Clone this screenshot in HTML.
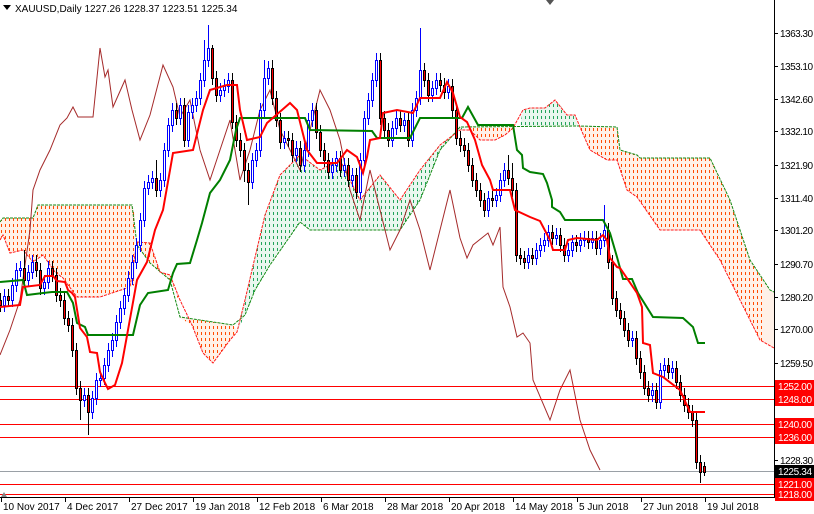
<!DOCTYPE html>
<html><head><meta charset="utf-8"><style>
html,body{margin:0;padding:0;background:#fff;width:814px;height:514px;overflow:hidden}
svg{display:block}
text{font-family:"Liberation Sans",sans-serif;font-size:10px}
</style></head><body>
<svg width="814" height="514" xmlns="http://www.w3.org/2000/svg">
<defs>
<clipPath id="co">
<polygon points="0,222 3,218 33,218 38,205 132,205 135,215 135,285 130,287 123,290 110,293 100,297 77,297 63,278 55,272 43,255 33,262 23,250 10,253 3,235 0,240"/>
<polygon points="137,242 150,243 160,272 170,275 177,297 180,300 170,280 150,263 137,245"/>
<polygon points="180,317 233,325 237,330 230,340 213,363 203,353 192,325 180,318"/>
<polygon points="470,126 520,126 513,128 505,135 495,140 480,140 470,130"/>
<polygon points="578,126 617,127 620,150 637,155 640,158 710,158 730,200 750,260 770,290 774,292 774,348 760,340 740,300 720,260 700,230 660,230 637,197 627,190 617,160 607,160 590,150 580,127"/>
</clipPath>
<clipPath id="cg">
<polygon points="237,332 245,300 252,270 265,215 280,175 300,155 320,170 340,160 360,200 380,175 400,200 420,170 440,145 460,130 470,126 460,127 440,150 420,200 410,215 400,230 310,230 300,222 270,265 255,290 245,315"/>
<polygon points="520,126 523,110 530,108 545,108 550,103 555,100 560,105 567,115 575,115 578,126"/>
</clipPath>
</defs>
<g fill="#fff1e8">
<polygon points="0,222 3,218 33,218 38,205 132,205 135,215 135,285 130,287 123,290 110,293 100,297 77,297 63,278 55,272 43,255 33,262 23,250 10,253 3,235 0,240"/>
<polygon points="137,242 150,243 160,272 170,275 177,297 180,300 170,280 150,263 137,245"/>
<polygon points="180,317 233,325 237,330 230,340 213,363 203,353 192,325 180,318"/>
<polygon points="470,126 520,126 513,128 505,135 495,140 480,140 470,130"/>
<polygon points="578,126 617,127 620,150 637,155 640,158 710,158 730,200 750,260 770,290 774,292 774,348 760,340 740,300 720,260 700,230 660,230 637,197 627,190 617,160 607,160 590,150 580,127"/>
</g>
<g fill="#eaf7ef">
<polygon points="237,332 245,300 252,270 265,215 280,175 300,155 320,170 340,160 360,200 380,175 400,200 420,170 440,145 460,130 470,126 460,127 440,150 420,200 410,215 400,230 310,230 300,222 270,265 255,290 245,315"/>
<polygon points="520,126 523,110 530,108 545,108 550,103 555,100 560,105 567,115 575,115 578,126"/>
</g>
<g clip-path="url(#co)">
<path fill="none" stroke="#ff4a00" stroke-width="1" stroke-dasharray="3,3" d="M1.5 98v275m4-275v275m4-275v275m4-275v275m4-275v275m4-275v275m4-275v275m4-275v275m4-275v275m4-275v275m4-275v275m4-275v275m4-275v275m4-275v275m4-275v275m4-275v275m4-275v275m4-275v275m4-275v275m4-275v275m4-275v275m4-275v275m4-275v275m4-275v275m4-275v275m4-275v275m4-275v275m4-275v275m4-275v275m4-275v275m4-275v275m4-275v275m4-275v275m4-275v275m4-275v275m4-275v275m4-275v275m4-275v275m4-275v275m4-275v275m4-275v275m4-275v275m4-275v275m4-275v275m4-275v275m4-275v275m4-275v275m4-275v275m4-275v275m4-275v275m4-275v275m4-275v275m4-275v275m4-275v275m4-275v275m4-275v275m4-275v275m4-275v275m4-275v275m4-275v275m4-275v275m4-275v275m4-275v275m4-275v275m4-275v275m4-275v275m4-275v275m4-275v275m4-275v275m4-275v275m4-275v275m4-275v275m4-275v275m4-275v275m4-275v275m4-275v275m4-275v275m4-275v275m4-275v275m4-275v275m4-275v275m4-275v275m4-275v275m4-275v275m4-275v275m4-275v275m4-275v275m4-275v275m4-275v275m4-275v275m4-275v275m4-275v275m4-275v275m4-275v275m4-275v275m4-275v275m4-275v275m4-275v275m4-275v275m4-275v275m4-275v275m4-275v275m4-275v275m4-275v275m4-275v275m4-275v275m4-275v275m4-275v275m4-275v275m4-275v275m4-275v275m4-275v275m4-275v275m4-275v275m4-275v275m4-275v275m4-275v275m4-275v275m4-275v275m4-275v275m4-275v275m4-275v275m4-275v275m4-275v275m4-275v275m4-275v275m4-275v275m4-275v275m4-275v275m4-275v275m4-275v275m4-275v275m4-275v275m4-275v275m4-275v275m4-275v275m4-275v275m4-275v275m4-275v275m4-275v275m4-275v275m4-275v275m4-275v275m4-275v275m4-275v275m4-275v275m4-275v275m4-275v275m4-275v275m4-275v275m4-275v275m4-275v275m4-275v275m4-275v275m4-275v275m4-275v275m4-275v275m4-275v275m4-275v275m4-275v275m4-275v275m4-275v275m4-275v275m4-275v275m4-275v275m4-275v275m4-275v275m4-275v275m4-275v275m4-275v275m4-275v275m4-275v275m4-275v275m4-275v275m4-275v275m4-275v275m4-275v275m4-275v275m4-275v275m4-275v275m4-275v275m4-275v275m4-275v275m4-275v275m4-275v275m4-275v275m4-275v275m4-275v275m4-275v275m4-275v275m4-275v275"/>
</g>
<g clip-path="url(#cg)">
<path fill="none" stroke="#22a35a" stroke-width="1" stroke-dasharray="3,3" d="M237.5 98v275m4-275v275m4-275v275m4-275v275m4-275v275m4-275v275m4-275v275m4-275v275m4-275v275m4-275v275m4-275v275m4-275v275m4-275v275m4-275v275m4-275v275m4-275v275m4-275v275m4-275v275m4-275v275m4-275v275m4-275v275m4-275v275m4-275v275m4-275v275m4-275v275m4-275v275m4-275v275m4-275v275m4-275v275m4-275v275m4-275v275m4-275v275m4-275v275m4-275v275m4-275v275m4-275v275m4-275v275m4-275v275m4-275v275m4-275v275m4-275v275m4-275v275m4-275v275m4-275v275m4-275v275m4-275v275m4-275v275m4-275v275m4-275v275m4-275v275m4-275v275m4-275v275m4-275v275m4-275v275m4-275v275m4-275v275m4-275v275m4-275v275m4-275v275m4-275v275m4-275v275m4-275v275m4-275v275m4-275v275m4-275v275m4-275v275m4-275v275m4-275v275m4-275v275m4-275v275m4-275v275m4-275v275m4-275v275m4-275v275m4-275v275m4-275v275m4-275v275m4-275v275m4-275v275m4-275v275m4-275v275m4-275v275m4-275v275m4-275v275m4-275v275"/>
</g>
<polyline fill="none" stroke="#138a13" stroke-width="1" stroke-dasharray="3,1" points="0,222 3,218 33,218 38,205 132,205 137,245 150,263 170,280 180,317 233,325 245,315 255,290 270,265 300,222 310,230 400,230 410,215 420,200 440,150 460,127 578,126 617,127 620,150 637,155 640,158 710,158 730,200 750,260 770,290 774,292"/>
<polyline fill="none" stroke="#ff1a1a" stroke-width="1" stroke-dasharray="3,1" points="0,240 3,235 10,253 23,250 33,262 43,255 55,272 63,278 77,297 100,297 130,287 137,242 150,243 160,272 170,275 180,300 192,325 203,353 213,363 230,340 237,332 245,300 252,270 265,215 280,175 300,155 320,170 340,160 360,200 380,175 400,200 420,170 440,145 460,130 470,130 480,140 495,140 505,135 513,128 523,110 530,108 545,108 555,100 567,115 575,115 580,127 590,150 607,160 617,160 627,190 637,197 660,230 700,230 720,260 740,300 760,340 774,348"/>
<polyline fill="none" stroke="#a52a2a" stroke-width="1" points="0,355 10,330 20,300 30,230 33,190 40,170 50,150 60,125 67,118 73,107 78,117 93,117 100,48 105,77 108,70 113,107 125,80 132,110 140,140 150,115 163,65 173,87 180,117 190,100 200,150 210,180 220,150 230,120 240,180 250,150 260,110 270,90 280,130 300,170 310,130 320,90 330,110 340,140 350,190 360,220 370,170 380,210 390,250 400,230 410,200 420,230 430,270 440,230 450,190 460,238 467,258 473,245 488,233 493,245 500,227 503,287 510,307 517,337 523,333 530,343 533,380 550,420 560,390 570,370 580,420 590,450 600,470"/>
<g stroke="#ff0000" stroke-width="1">
<line x1="0" x2="774" y1="386.5" y2="386.5"/><line x1="0" x2="774" y1="399.5" y2="399.5"/>
<line x1="0" x2="774" y1="424.5" y2="424.5"/><line x1="0" x2="774" y1="437.5" y2="437.5"/>
<line x1="0" x2="774" y1="484.5" y2="484.5"/><line x1="0" x2="774" y1="494.5" y2="494.5"/>
</g>
<line x1="0" x2="774" y1="471.5" y2="471.5" stroke="#9aa0a6"/>
<path fill="none" stroke="#0000ff" stroke-width="1" d="M4.5 289V312 M12.5 278V307 M16.5 263V292 M20.5 261V277 M28.5 265V287 M32.5 255V279 M44.5 275V295 M48.5 261V289 M84.5 388V407 M92.5 391V419 M96.5 373V405 M100.5 371V387 M104.5 358V385 M108.5 343V372 M112.5 333V357 M116.5 315V347 M120.5 301V329 M124.5 288V315 M128.5 271V302 M132.5 255V285 M136.5 238V269 M140.5 213V252 M144.5 181V227 M148.5 175V195 M152.5 171V189 M160.5 173V197 M164.5 143V187 M168.5 118V157 M172.5 103V132 M180.5 98V125 M188.5 105V147 M192.5 98V119 M196.5 91V112 M200.5 73V105 M204.5 40V87 M208.5 25V67 M220.5 83V102 M224.5 79V97 M228.5 73V93 M252.5 153V189 M256.5 143V167 M260.5 103V157 M264.5 60V117 M268.5 61V85 M284.5 131V149 M296.5 141V162 M304.5 143V172 M308.5 113V157 M312.5 103V127 M332.5 158V179 M336.5 151V172 M344.5 158V177 M352.5 168V187 M360.5 153V199 M364.5 111V167 M368.5 93V125 M372.5 73V107 M376.5 53V87 M392.5 121V147 M396.5 111V135 M404.5 113V132 M412.5 103V147 M416.5 91V117 M420.5 28V105 M432.5 81V102 M436.5 73V95 M448.5 79V99 M488.5 191V217 M496.5 188V207 M500.5 173V202 M504.5 163V187 M528.5 248V269 M536.5 243V265 M540.5 238V257 M544.5 233V252 M548.5 225V247 M556.5 228V245 M568.5 243V262 M572.5 235V257 M580.5 233V252 M584.5 231V247 M592.5 231V249 M600.5 233V255 M604.5 205V247 M632.5 331V347 M652.5 383V402 M660.5 363V409 M664.5 358V377 M672.5 361V379"/>
<path fill="#fff" stroke="#0000ff" stroke-width="1" d="M3.5 296.5h2v9h-2z M11.5 285.5h2v15h-2z M15.5 270.5h2v15h-2z M19.5 268.5h2v2h-2z M27.5 272.5h2v8h-2z M31.5 262.5h2v10h-2z M43.5 282.5h2v6h-2z M47.5 268.5h2v14h-2z M83.5 395.5h2v5h-2z M91.5 398.5h2v14h-2z M95.5 380.5h2v18h-2z M99.5 378.5h2v2h-2z M103.5 365.5h2v13h-2z M107.5 350.5h2v15h-2z M111.5 340.5h2v10h-2z M115.5 322.5h2v18h-2z M119.5 308.5h2v14h-2z M123.5 295.5h2v13h-2z M127.5 278.5h2v17h-2z M131.5 262.5h2v16h-2z M135.5 245.5h2v17h-2z M139.5 220.5h2v25h-2z M143.5 188.5h2v32h-2z M147.5 182.5h2v6h-2z M151.5 178.5h2v4h-2z M159.5 180.5h2v10h-2z M163.5 150.5h2v30h-2z M167.5 125.5h2v25h-2z M171.5 110.5h2v15h-2z M179.5 105.5h2v13h-2z M187.5 112.5h2v28h-2z M191.5 105.5h2v7h-2z M195.5 98.5h2v7h-2z M199.5 80.5h2v18h-2z M203.5 60.5h2v20h-2z M207.5 48.5h2v12h-2z M219.5 90.5h2v5h-2z M223.5 86.5h2v4h-2z M227.5 80.5h2v6h-2z M251.5 160.5h2v22h-2z M255.5 150.5h2v10h-2z M259.5 110.5h2v40h-2z M263.5 78.5h2v32h-2z M267.5 68.5h2v10h-2z M283.5 138.5h2v4h-2z M295.5 148.5h2v7h-2z M303.5 150.5h2v15h-2z M307.5 120.5h2v30h-2z M311.5 110.5h2v10h-2z M331.5 165.5h2v7h-2z M335.5 158.5h2v7h-2z M343.5 165.5h2v5h-2z M351.5 175.5h2v5h-2z M359.5 160.5h2v32h-2z M363.5 118.5h2v42h-2z M367.5 100.5h2v18h-2z M371.5 80.5h2v20h-2z M375.5 60.5h2v20h-2z M391.5 128.5h2v12h-2z M395.5 118.5h2v10h-2z M403.5 120.5h2v5h-2z M411.5 110.5h2v30h-2z M415.5 98.5h2v12h-2z M419.5 70.5h2v28h-2z M431.5 88.5h2v7h-2z M435.5 80.5h2v8h-2z M447.5 86.5h2v6h-2z M487.5 198.5h2v12h-2z M495.5 195.5h2v5h-2z M499.5 180.5h2v15h-2z M503.5 170.5h2v10h-2z M527.5 255.5h2v7h-2z M535.5 250.5h2v8h-2z M539.5 245.5h2v5h-2z M543.5 240.5h2v5h-2z M547.5 232.5h2v8h-2z M555.5 235.5h2v3h-2z M567.5 250.5h2v5h-2z M571.5 242.5h2v8h-2z M579.5 240.5h2v5h-2z M583.5 238.5h2v2h-2z M591.5 238.5h2v4h-2z M599.5 240.5h2v8h-2z M603.5 230.5h2v10h-2z M631.5 338.5h2v2h-2z M651.5 390.5h2v5h-2z M659.5 370.5h2v32h-2z M663.5 365.5h2v5h-2z M671.5 368.5h2v4h-2z"/>
<path fill="none" stroke="#000" stroke-width="1" d="M0.5 293V312 M8.5 289V307 M24.5 250V287 M36.5 255V277 M40.5 263V295 M52.5 261V282 M56.5 268V302 M60.5 288V307 M64.5 293V325 M68.5 311V332 M72.5 318V357 M76.5 343V395 M80.5 381V420 M88.5 388V435 M156.5 160V197 M176.5 103V125 M184.5 98V147 M212.5 45V85 M216.5 71V102 M232.5 73V129 M236.5 115V147 M240.5 133V157 M244.5 143V182 M248.5 163V205 M272.5 60V105 M276.5 91V127 M280.5 113V149 M288.5 131V147 M292.5 133V162 M300.5 141V172 M316.5 103V139 M320.5 125V157 M324.5 143V167 M328.5 153V179 M340.5 151V177 M348.5 158V187 M356.5 168V199 M380.5 53V125 M384.5 111V137 M388.5 123V147 M400.5 111V132 M408.5 113V147 M424.5 63V87 M428.5 73V102 M440.5 73V92 M444.5 78V99 M452.5 79V117 M456.5 103V145 M460.5 131V152 M464.5 138V157 M468.5 143V172 M472.5 158V187 M476.5 173V197 M480.5 183V207 M484.5 193V217 M492.5 191V207 M508.5 155V185 M512.5 163V197 M516.5 183V262 M520.5 248V265 M524.5 251V269 M532.5 248V265 M552.5 225V245 M560.5 228V252 M564.5 238V262 M576.5 235V252 M588.5 231V249 M596.5 231V255 M608.5 223V269 M612.5 255V305 M616.5 291V317 M620.5 303V325 M624.5 311V337 M628.5 323V347 M636.5 331V365 M640.5 351V379 M644.5 365V395 M648.5 381V402 M656.5 383V409 M668.5 358V379 M676.5 361V389 M680.5 375V402 M684.5 388V412 M688.5 398V419 M692.5 405V427 M696.5 413V469 M700.5 455V483 M704.5 462V476"/>
<path fill="#ff0000" stroke="#000" stroke-width="1" d="M-0.5 300.5h2v5h-2z M7.5 296.5h2v4h-2z M23.5 268.5h2v12h-2z M35.5 262.5h2v8h-2z M39.5 270.5h2v18h-2z M51.5 268.5h2v7h-2z M55.5 275.5h2v20h-2z M59.5 295.5h2v5h-2z M63.5 300.5h2v18h-2z M67.5 318.5h2v7h-2z M71.5 325.5h2v25h-2z M75.5 350.5h2v38h-2z M79.5 388.5h2v12h-2z M87.5 395.5h2v17h-2z M155.5 178.5h2v12h-2z M175.5 110.5h2v8h-2z M183.5 105.5h2v35h-2z M211.5 48.5h2v30h-2z M215.5 78.5h2v17h-2z M231.5 80.5h2v42h-2z M235.5 122.5h2v18h-2z M239.5 140.5h2v10h-2z M243.5 150.5h2v20h-2z M247.5 170.5h2v12h-2z M271.5 68.5h2v30h-2z M275.5 98.5h2v22h-2z M279.5 120.5h2v22h-2z M287.5 138.5h2v2h-2z M291.5 140.5h2v15h-2z M299.5 148.5h2v17h-2z M315.5 110.5h2v22h-2z M319.5 132.5h2v18h-2z M323.5 150.5h2v10h-2z M327.5 160.5h2v12h-2z M339.5 158.5h2v12h-2z M347.5 165.5h2v15h-2z M355.5 175.5h2v17h-2z M379.5 60.5h2v58h-2z M383.5 118.5h2v12h-2z M387.5 130.5h2v10h-2z M399.5 118.5h2v7h-2z M407.5 120.5h2v20h-2z M423.5 70.5h2v10h-2z M427.5 80.5h2v15h-2z M439.5 80.5h2v5h-2z M443.5 85.5h2v7h-2z M451.5 86.5h2v24h-2z M455.5 110.5h2v28h-2z M459.5 138.5h2v7h-2z M463.5 145.5h2v5h-2z M467.5 150.5h2v15h-2z M471.5 165.5h2v15h-2z M475.5 180.5h2v10h-2z M479.5 190.5h2v10h-2z M483.5 200.5h2v10h-2z M491.5 198.5h2v2h-2z M507.5 170.5h2v8h-2z M511.5 178.5h2v12h-2z M515.5 190.5h2v65h-2z M519.5 255.5h2v3h-2z M523.5 258.5h2v4h-2z M531.5 255.5h2v3h-2z M551.5 232.5h2v6h-2z M559.5 235.5h2v10h-2z M563.5 245.5h2v10h-2z M575.5 242.5h2v3h-2z M587.5 238.5h2v4h-2z M595.5 238.5h2v10h-2z M607.5 230.5h2v32h-2z M611.5 262.5h2v36h-2z M615.5 298.5h2v12h-2z M619.5 310.5h2v8h-2z M623.5 318.5h2v12h-2z M627.5 330.5h2v10h-2z M635.5 338.5h2v20h-2z M639.5 358.5h2v14h-2z M643.5 372.5h2v16h-2z M647.5 388.5h2v7h-2z M655.5 390.5h2v12h-2z M667.5 365.5h2v7h-2z M675.5 368.5h2v14h-2z M679.5 382.5h2v13h-2z M683.5 395.5h2v10h-2z M687.5 405.5h2v7h-2z M691.5 412.5h2v8h-2z M695.5 420.5h2v42h-2z M699.5 462.5h2v10h-2z M703.5 466.5h2v6h-2z"/>
<polyline fill="none" stroke="#007f00" stroke-width="2" points="0,282 23,280 27,295 43,293 52,292 67,292 73,303 77,323 85,327 88,335 133,335 140,305 148,293 168,290 173,273 177,264 190,263 197,240 202,223 210,193 220,180 230,160 236,130 240,118 305,118 310,130 372,131 377,138 410,138 420,118 462,118 468,107 478,125 513,125 517,150 522,155 523,168 530,172 543,174 547,183 552,200 552,207 560,212 565,220 603,220 610,233 617,257 623,279 632,279 638,293 653,317 683,318 693,327 698,343 705,343"/>
<polyline fill="none" stroke="#ff0000" stroke-width="2" points="0,307 20,305 23,287 40,285 45,276 53,276 57,281 65,282 68,290 72,293 75,297 80,328 87,337 90,352 97,353 100,372 105,383 108,389 115,385 122,363 128,330 137,280 147,262 155,230 163,210 173,153 193,150 203,110 210,90 227,85 237,85 240,110 247,140 260,137 267,123 290,103 297,110 307,150 317,163 337,163 347,150 357,157 363,173 367,157 370,140 380,138 383,113 397,110 413,113 420,98 440,98 447,82 453,93 460,117 467,122 475,140 482,165 490,180 493,190 510,190 515,210 530,217 540,221 550,240 553,250 565,250 568,240 577,238 597,240 603,235 607,240 610,258 617,267 620,268 637,293 642,307 643,343 650,345 653,373 663,377 680,390 690,412 705,412"/>
<rect x="775" y="0" width="39" height="514" fill="#fff"/>
<line x1="774.5" x2="774.5" y1="0" y2="498" stroke="#000"/>
<line x1="0" x2="775" y1="497.5" y2="497.5" stroke="#000"/>
<g stroke="#000">
<line x1="774" x2="778" y1="33.5" y2="33.5"/><line x1="774" x2="778" y1="66.5" y2="66.5"/><line x1="774" x2="778" y1="99.5" y2="99.5"/><line x1="774" x2="778" y1="131.5" y2="131.5"/><line x1="774" x2="778" y1="165.5" y2="165.5"/><line x1="774" x2="778" y1="198.5" y2="198.5"/><line x1="774" x2="778" y1="230.5" y2="230.5"/><line x1="774" x2="778" y1="264.5" y2="264.5"/><line x1="774" x2="778" y1="297.5" y2="297.5"/><line x1="774" x2="778" y1="329.5" y2="329.5"/><line x1="774" x2="778" y1="363.5" y2="363.5"/><line x1="774" x2="778" y1="460.5" y2="460.5"/>
</g>
<g fill="#000">
<text x="780" y="37" textLength="33">1363.30</text><text x="780" y="70" textLength="33">1353.10</text><text x="780" y="103" textLength="33">1342.60</text><text x="780" y="135" textLength="33">1332.10</text><text x="780" y="169" textLength="33">1321.90</text><text x="780" y="202" textLength="33">1311.40</text><text x="780" y="234" textLength="33">1301.20</text><text x="780" y="268" textLength="33">1290.70</text><text x="780" y="301" textLength="33">1280.20</text><text x="780" y="333" textLength="33">1270.00</text><text x="780" y="367" textLength="33">1259.50</text><text x="780" y="464" textLength="33">1228.30</text>
</g>
<g fill="#ff0000">
<rect x="775" y="380" width="39" height="13"/><rect x="775" y="393" width="39" height="13"/><rect x="775" y="418" width="39" height="13"/><rect x="775" y="431" width="39" height="13"/><rect x="775" y="478" width="39" height="13"/><rect x="775" y="488" width="39" height="13"/>
</g>
<rect x="775" y="465" width="39" height="13" fill="#000"/>
<g fill="#fff">
<text x="778" y="390" textLength="34">1252.00</text><text x="778" y="403" textLength="34">1248.00</text><text x="778" y="428" textLength="34">1240.00</text><text x="778" y="441" textLength="34">1236.00</text><text x="778" y="475" textLength="34">1225.34</text><text x="778" y="488" textLength="34">1221.00</text><text x="778" y="498" textLength="34">1218.00</text>
</g>
<g stroke="#000">
<line x1="1.5" x2="1.5" y1="497" y2="502"/><line x1="65.5" x2="65.5" y1="497" y2="502"/><line x1="129.5" x2="129.5" y1="497" y2="502"/><line x1="193.5" x2="193.5" y1="497" y2="502"/><line x1="257.5" x2="257.5" y1="497" y2="502"/><line x1="321.5" x2="321.5" y1="497" y2="502"/><line x1="385.5" x2="385.5" y1="497" y2="502"/><line x1="449.5" x2="449.5" y1="497" y2="502"/><line x1="513.5" x2="513.5" y1="497" y2="502"/><line x1="577.5" x2="577.5" y1="497" y2="502"/><line x1="641.5" x2="641.5" y1="497" y2="502"/><line x1="705.5" x2="705.5" y1="497" y2="502"/>
</g>
<g fill="#000">
<text x="3" y="510">10 Nov 2017</text><text x="67" y="510">4 Dec 2017</text><text x="131" y="510">27 Dec 2017</text><text x="195" y="510">19 Jan 2018</text><text x="259" y="510">12 Feb 2018</text><text x="323" y="510">6 Mar 2018</text><text x="387" y="510">28 Mar 2018</text><text x="451" y="510">20 Apr 2018</text><text x="515" y="510">14 May 2018</text><text x="579" y="510">5 Jun 2018</text><text x="643" y="510">27 Jun 2018</text><text x="707" y="510">19 Jul 2018</text>
</g>
<polygon points="3,5 11,5 7,10" fill="#000"/>
<text x="15" y="12" fill="#000" font-size="11">XAUUSD,Daily  1227.26 1228.37 1223.51 1225.34</text>
<polygon points="546,0 554,0 550,5" fill="#555"/>
<polygon points="1,497 7,497 4,492" fill="#888"/>
</svg>
</body></html>
